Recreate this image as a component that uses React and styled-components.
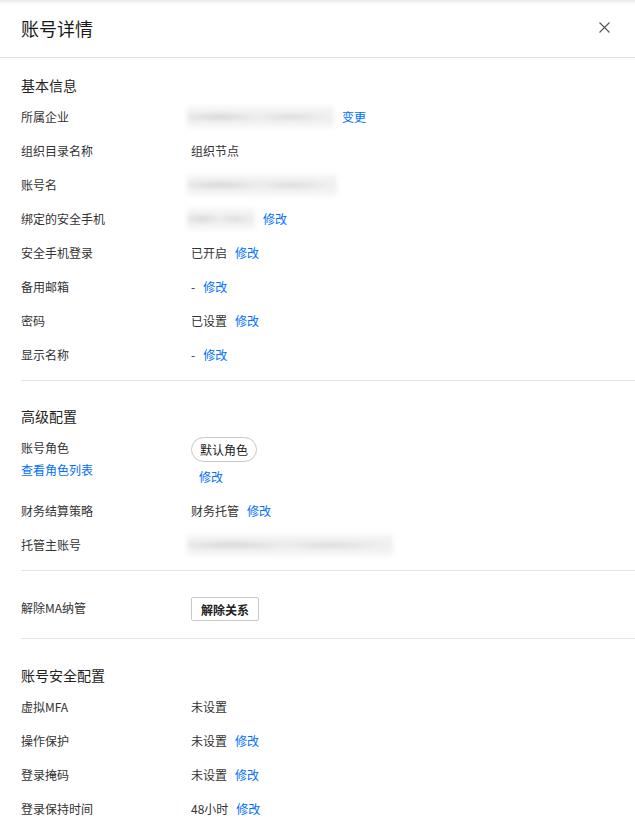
import React from "react";
import styled, { createGlobalStyle } from "styled-components";

const GlobalStyle = createGlobalStyle`
  html, body {
    margin: 0;
    padding: 0;
    background: #ffffff;
  }
  body {
    font-family: "Noto Sans CJK SC", "Liberation Sans", sans-serif;
    color: #333333;
    -webkit-font-smoothing: antialiased;
  }
`;

const basicRows = [
  { label: "所属企业", redacted: 147, link: "变更" },
  { label: "组织目录名称", value: "组织节点" },
  { label: "账号名", redacted: 150 },
  { label: "绑定的安全手机", redacted: 68, link: "修改" },
  { label: "安全手机登录", value: "已开启", link: "修改" },
  { label: "备用邮箱", value: "-", link: "修改" },
  { label: "密码", value: "已设置", link: "修改" },
  { label: "显示名称", value: "-", link: "修改" },
];

const securityRows = [
  { label: "虚拟MFA", value: "未设置" },
  { label: "操作保护", value: "未设置", link: "修改" },
  { label: "登录掩码", value: "未设置", link: "修改" },
  { label: "登录保持时间", value: "48小时", link: "修改" },
];

const InfoRow = ({ label, value, redacted, link }) => (
  <Row>
    <Label>{label}</Label>
    <Value>
      {redacted && <Redacted width={redacted} />}
      {value && <span>{value}</span>}
      {link && <Link>{link}</Link>}
    </Value>
  </Row>
);

const App = () => {
  return (
    <>
      <GlobalStyle />
      <Drawer>
        <Header>
          <Title>账号详情</Title>
          <Close aria-label="close">
            <svg width="11" height="11" viewBox="0 0 11 11">
              <path
                d="M0.5 0.5 L10.5 10.5 M10.5 0.5 L0.5 10.5"
                stroke="#555"
                strokeWidth="1.1"
                fill="none"
              />
            </svg>
          </Close>
        </Header>

        <Section first>
          <SectionTitle first>基本信息</SectionTitle>
          {basicRows.map((r) => (
            <InfoRow key={r.label} {...r} />
          ))}
        </Section>

        <Section>
          <SectionTitle>高级配置</SectionTitle>
          <Row>
            <LabelStack>
              <Label>账号角色</Label>
              <Link>查看角色列表</Link>
            </LabelStack>
            <ValueStack>
              <Tag>默认角色</Tag>
              <Link indent>修改</Link>
            </ValueStack>
          </Row>
          <InfoRow label="财务结算策略" value="财务托管" link="修改" />
          <InfoRow label="托管主账号" redacted={206} />
        </Section>

        <Section compact>
          <Row>
            <Label>解除MA纳管</Label>
            <Value>
              <Button>解除关系</Button>
            </Value>
          </Row>
        </Section>

        <Section last>
          <SectionTitle tall>账号安全配置</SectionTitle>
          {securityRows.map((r) => (
            <InfoRow key={r.label} {...r} />
          ))}
        </Section>
      </Drawer>
    </>
  );
};

export default App;

const Drawer = styled.div`
  width: 635px;
  min-height: 834px;
  background: #ffffff;
  font-size: 12px;
`;

const Header = styled.div`
  height: 57px;
  display: flex;
  align-items: center;
  justify-content: space-between;
  padding: 0 21px;
  border-bottom: 1px solid #e2e2e2;
  background: linear-gradient(#e9e9e9 0, #fafafa 3px, #ffffff 6px);
`;

const Title = styled.h1`
  margin: 0 0 2px;
  font-size: 18px;
  font-weight: 400;
  color: #1a1a1a;
  line-height: 24px;
`;

const Close = styled.button`
  display: flex;
  align-items: center;
  justify-content: center;
  width: 20px;
  height: 20px;
  margin-bottom: 2px;
  padding: 0;
  border: none;
  background: transparent;
  cursor: pointer;
`;

const Section = styled.div`
  margin-left: 21px;
  padding-bottom: ${({ last }) => (last ? "9px" : "8px")};
  border-bottom: ${({ last }) => (last ? "none" : "1px solid #e4e4e4")};
  ${({ compact }) => compact && "padding: 20px 0 11px;"}
`;

const SectionTitle = styled.h2`
  margin: 0 0 5px;
  padding-top: ${({ first, tall }) => (first ? "17px" : tall ? "26px" : "25px")};
  font-size: 14px;
  font-weight: 400;
  line-height: 20px;
  color: #222222;
`;

const Row = styled.div`
  display: flex;
  align-items: flex-start;
  padding: 6px 0;
  min-height: 22px;
  line-height: 22px;
`;

const Label = styled.div`
  width: 170px;
  flex-shrink: 0;
  color: #333333;
`;

const LabelStack = styled.div`
  width: 170px;
  flex-shrink: 0;
  display: flex;
  flex-direction: column;
  align-items: flex-start;
`;

const Value = styled.div`
  display: flex;
  align-items: center;
  gap: 8px;
  color: #333333;
  min-height: 22px;
`;

const ValueStack = styled.div`
  display: flex;
  flex-direction: column;
  align-items: flex-start;
  gap: 4px;
`;

const Link = styled.a`
  color: #006eff;
  cursor: pointer;
  padding-left: ${({ indent }) => (indent ? "8px" : "0")};
`;

const Redacted = styled.span`
  display: inline-block;
  width: ${({ width }) => width}px;
  height: 22px;
  margin-left: -4px;
  background:
    radial-gradient(ellipse 30% 22% at 22% 50%, rgba(170, 170, 170, 0.4), transparent),
    radial-gradient(ellipse 26% 20% at 70% 50%, rgba(175, 175, 175, 0.35), transparent),
    linear-gradient(#f7f7f7, #eeeeee 50%, #f7f7f7);
  filter: blur(2px);
`;

const Tag = styled.span`
  display: inline-flex;
  align-items: center;
  height: 23px;
  padding: 0 8px;
  border: 1px solid #c8c8c8;
  border-radius: 13px;
  color: #222222;
  font-size: 12px;
  line-height: 23px;
`;

const Button = styled.button`
  height: 24px;
  padding: 0 9px;
  border: 1px solid #c9c9c9;
  border-radius: 2px;
  background: #ffffff;
  font-family: "Noto Sans CJK SC", "Liberation Sans", sans-serif;
  font-size: 12px;
  font-weight: 600;
  color: #222222;
  cursor: pointer;
`;
